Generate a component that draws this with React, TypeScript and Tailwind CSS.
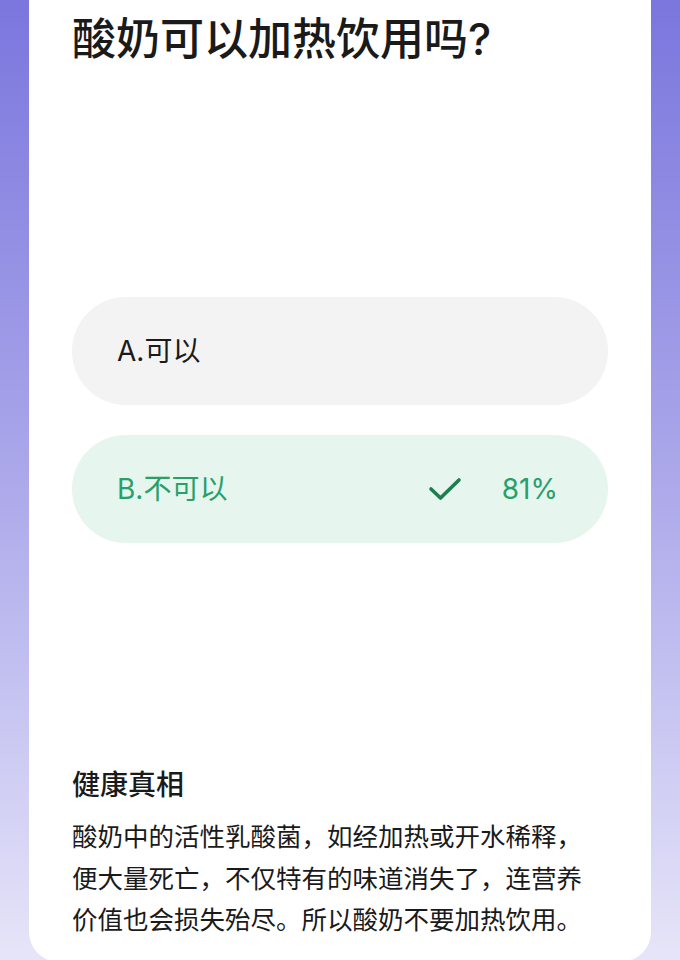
const FONT = { fontFamily: 'Inter, "Noto Sans CJK SC", sans-serif' }

function Option({ label, correct, pct }: { label: string; correct?: boolean; pct?: string }) {
  return (
    <div
      className={
        'h-[108px] rounded-full flex items-center pl-[45px] pr-[50px] ' +
        (correct ? 'bg-[#e6f5ee] text-[#27a06a]' : 'bg-[#f3f3f3] text-[#1a1a1a]')
      }
    >
      <span className="text-[28px] leading-none flex-1">{label}</span>
      {correct && (
        <>
          <svg width="34" height="26" viewBox="0 0 34 26" fill="none" className="mr-[40px]">
            <path d="M3 13 L12.5 22 L31 4" stroke="#1f7d52" strokeWidth="3.6" strokeLinecap="round" strokeLinejoin="round" />
          </svg>
          <span className="text-[28px] leading-none">{pct}</span>
        </>
      )}
    </div>
  )
}

export default function App() {
  return (
    <div
      style={FONT}
      className="w-[680px] h-[960px] overflow-hidden bg-gradient-to-b from-[#7b76dd] via-[#aca8ea] to-[#e6e5f8] px-[29px]"
    >
      <div className="bg-white rounded-b-[30px] h-[962px] px-[43px] pt-[9px] flex flex-col">
        <h1 className="text-[44px] leading-[60px] font-medium text-[#1a1a1a]">酸奶可以加热饮用吗?</h1>
        <div className="mt-[228px] flex flex-col gap-[30px]">
          <Option label="A.可以" />
          <Option label="B.不可以" correct pct="81%" />
        </div>
        <div className="mt-[222px] text-[#1a1a1a]">
          <h2 className="text-[28px] leading-[40px] font-medium">健康真相</h2>
          <p className="mt-[11px] text-[25.5px] leading-[41.5px] pr-[10px]">
            酸奶中的活性乳酸菌，如经加热或开水稀释，便大量死亡，不仅特有的味道消失了，连营养价值也会损失殆尽。所以酸奶不要加热饮用。
          </p>
        </div>
      </div>
    </div>
  )
}
